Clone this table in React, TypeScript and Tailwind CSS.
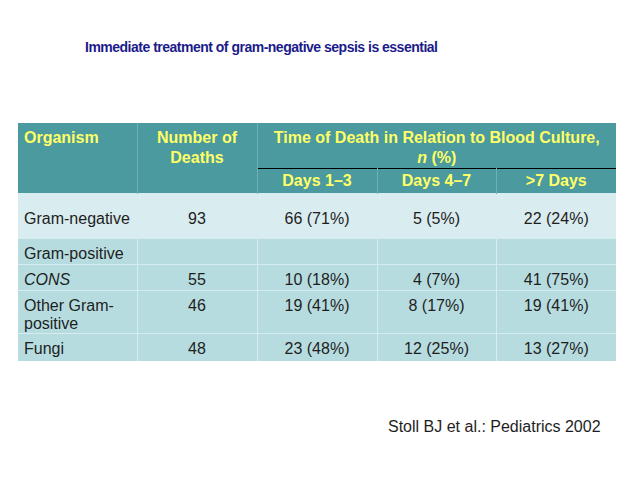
import React from "react";

type Row = {
  name: React.ReactNode;
  deaths: string;
  d13: string;
  d47: string;
  d7: string;
  h: string;
  pt: string;
  light?: boolean;
};

const rows: Row[] = [
  { name: "Gram-negative", deaths: "93", d13: "66 (71%)", d47: "5 (5%)", d7: "22 (24%)", h: "h-[45px]", pt: "pt-[16px]", light: true },
  { name: "Gram-positive", deaths: "", d13: "", d47: "", d7: "", h: "h-[26px]", pt: "pt-[6px]" },
  { name: <i>CONS</i>, deaths: "55", d13: "10 (18%)", d47: "4 (7%)", d7: "41 (75%)", h: "h-[26px]", pt: "pt-[6px]" },
  { name: <>Other Gram-<br />positive</>, deaths: "46", d13: "19 (41%)", d47: "8 (17%)", d7: "19 (41%)", h: "h-[43px]", pt: "pt-[6px]" },
  { name: "Fungi", deaths: "48", d13: "23 (48%)", d47: "12 (25%)", d7: "13 (27%)", h: "h-[27px]", pt: "pt-[6px]" },
];

export default function App() {
  return (
    <div className="w-[638px] h-[479px] bg-white font-['Liberation_Sans',Arial,sans-serif] overflow-hidden">
      <div className="pt-[38px] pl-[85px] h-[123px]">
        <p className="text-[14px] leading-[18px] font-bold text-[#1b1b8a] tracking-[-0.5px]">
          Immediate treatment of gram-negative sepsis is essential
        </p>
      </div>

      <table className="ml-[18px] w-[598px] table-fixed border-collapse text-[16px] leading-[18px]">
        <colgroup>
          <col className="w-[119px]" />
          <col className="w-[120px]" />
          <col className="w-[120px]" />
          <col className="w-[119px]" />
          <col className="w-[120px]" />
        </colgroup>
        <thead className="bg-[#4a9a9f] text-[#ffff66] font-bold">
          <tr className="h-[45px]">
            <th rowSpan={2} className="align-top text-left pl-[6px] pt-[5px] leading-[20px] border-r border-[#6fb0b4]">
              Organism
            </th>
            <th rowSpan={2} className="align-top text-center pt-[5px] leading-[20px] border-r border-[#6fb0b4]">
              Number of
              <br />
              Deaths
            </th>
            <th colSpan={3} className="align-top text-center pt-[5px] leading-[20px]">
              Time of Death in Relation to Blood Culture,
              <br />
              <i>n</i> (%)
            </th>
          </tr>
          <tr className="h-[25px]">
            <th className="text-center border-t border-black border-r border-r-[#6fb0b4]">Days 1–3</th>
            <th className="text-center border-t border-black border-r border-r-[#6fb0b4]">Days 4–7</th>
            <th className="text-center border-t border-black">&gt;7 Days</th>
          </tr>
        </thead>
        <tbody className="text-[#1e1e1e]">
          {rows.map((r, i) => (
            <tr
              key={i}
              className={`${r.h} ${r.light ? "bg-[#d9ecef]" : "bg-[#b7dce0]"} border-t border-[#d6ecee]`}
            >
              <td className={`align-top text-left pl-[6px] ${r.pt} border-r border-[#d6ecee]`}>{r.name}</td>
              <td className={`align-top text-center ${r.pt} border-r border-[#d6ecee]`}>{r.deaths}</td>
              <td className={`align-top text-center ${r.pt} border-r border-[#d6ecee]`}>{r.d13}</td>
              <td className={`align-top text-center ${r.pt} border-r border-[#d6ecee]`}>{r.d47}</td>
              <td className={`align-top text-center ${r.pt}`}>{r.d7}</td>
            </tr>
          ))}
        </tbody>
      </table>

      <div className="pt-[57px] pl-[388px]">
        <p className="text-[16px] leading-[18px] text-[#1e1e1e]">Stoll BJ et al.: Pediatrics 2002</p>
      </div>
    </div>
  );
}
